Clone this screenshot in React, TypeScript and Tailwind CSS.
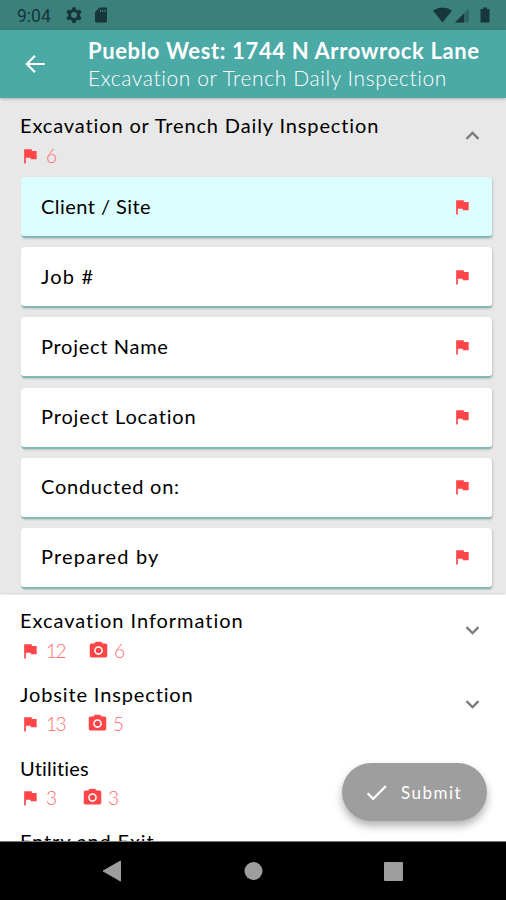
import React from "react";

const FLAG = "M14.4 6L14 4H5v17h2v-7h5.6l.4 2h7V6z";

function Icon({ d, size, className = "" }: { d: string; size: number; className?: string }) {
  return (
    <svg width={size} height={size} viewBox="0 0 24 24" fill="currentColor" className={`shrink-0 ${className}`}>
      <path d={d} />
    </svg>
  );
}

function Camera() {
  return (
    <svg width="21" height="21" viewBox="0 0 24 24" fill="currentColor" className="shrink-0">
      <circle cx="12" cy="12" r="3.2" />
      <path d="M9 2L7.17 4H4c-1.1 0-2 .9-2 2v12c0 1.1.9 2 2 2h16c1.1 0 2-.9 2-2V6c0-1.1-.9-2-2-2h-3.170L15 2H9zm3 15c-2.760 0-5-2.240-5-5s2.240-5 5-5 5 2.240 5 5-2.240 5-5 5z" />
    </svg>
  );
}

function Chevron({ up = false }: { up?: boolean }) {
  return (
    <svg width="25" height="25" viewBox="0 0 24 24" fill="#7b7b7b" className="shrink-0">
      <path d={up ? "M12 8l-6.500 6.500 1.500 1.500L12 11l5 5 1.500-1.500z" : "M7 8l5 5 5-5 1.500 1.500L12 16 5.500 9.500z"} />
    </svg>
  );
}

function Counts({ flags, photos, gap = "" }: { flags: string; photos?: string; gap?: string }) {
  return (
    <div className="flex h-5 items-center text-[19px] font-light leading-5 text-[#ff6b6e]">
      <span className="flex w-[31px] shrink-0 pt-px text-[#ff4548]">
        <Icon d={FLAG} size={20} />
      </span>
      <span className={`-ml-[5px] pt-px tracking-[-1.500px] ${gap}`}>{flags}</span>
      {photos && (
        <>
          <span className="flex w-[26px] shrink-0 text-[#ff4548]">
            <Camera />
          </span>
          <span className="pt-px">{photos}</span>
        </>
      )}
    </div>
  );
}

const fields = [
  { label: "Client / Site", track: "tracking-[0.45px]", bg: "bg-[#dcfeff]" },
  { label: "Job #", track: "tracking-[1.2px]", bg: "bg-white" },
  { label: "Project Name", track: "tracking-[0.7px]", bg: "bg-white" },
  { label: "Project Location", track: "tracking-[0.85px]", bg: "bg-white" },
  { label: "Conducted on:", track: "tracking-[0.75px]", bg: "bg-white" },
  { label: "Prepared by", track: "tracking-[1.2px]", bg: "bg-white" },
];

const sections = [
  { title: "Excavation Information", track: "tracking-[0.97px]", flags: "12", photos: "6", gap: "w-[42px]", open: true },
  { title: "Jobsite Inspection", track: "tracking-[0.87px]", flags: "13", photos: "5", gap: "w-[41px]", open: true },
  { title: "Utilities", track: "tracking-[0.2px]", flags: "3", photos: "3", gap: "w-[36px]", open: false },
  { title: "Entry and Exit", track: "tracking-[0.85px]", flags: "", photos: "", gap: "", open: false },
];

export default function App() {
  return (
    <div className="relative flex h-[900px] w-[506px] flex-col overflow-hidden bg-white font-['Lato',sans-serif] text-black">
      <div className="flex h-[30px] shrink-0 items-center bg-[#3c807b] text-[#16363a]">
        <span className="ml-[17px] w-[48px] pt-0.5 font-['Roboto',sans-serif] text-[17.500px]">9:04</span>
        <svg width="18" height="18" viewBox="0 0 24 24" className="shrink-0">
          <g fill="currentColor">
            <rect x="9.500" y="1.500" width="5" height="21" rx="1" />
            <rect x="9.500" y="1.500" width="5" height="21" rx="1" transform="rotate(60 12 12)" />
            <rect x="9.500" y="1.500" width="5" height="21" rx="1" transform="rotate(120 12 12)" />
          </g>
          <circle cx="12" cy="12" r="6" fill="#3c807b" stroke="currentColor" strokeWidth="4" />
        </svg>
        <Icon size={18} className="ml-[9px]" d="M20 2H10L4 8v12a2 2 0 0 0 2 2h12a2 2 0 0 0 2-2V2zm-8 6h-1.500V5H12v3zm3 0h-1.500V5H15v3zm3 0h-1.500V5H18v3z" />
        <svg width="62" height="20" viewBox="0 0 62 20" className="ml-auto mr-[14px]" fill="currentColor">
          <path d="M3 5.500Q12.500-.5 22 5.500L12.500 17.500z" />
          <path d="M39 3.500v14h-14z" opacity=".35" />
          <path d="M34 8.500v9h-9z" />
          <path d="M53 2.500h4V4h2.500v13.500h-9V4H53z" />
        </svg>
      </div>

      <header className="z-10 flex h-[68px] shrink-0 items-center bg-[#4ba9a6] text-white shadow-[0_1px_3px_rgba(0,0,0,0.25)]">
        <svg width="26" height="26" viewBox="0 0 24 24" fill="white" className="ml-[22px] shrink-0">
          <path d="M21 11H6.800l5.900-6-1.400-1.400L3 12l8.300 8.400 1.400-1.400-5.900-6H21z" />
        </svg>
        <div className="ml-10 whitespace-nowrap">
          <h1 className="h-[28px] pt-px text-[22px] font-bold leading-[28px] tracking-[0.63px]">Pueblo West: 1744 N Arrowrock Lane</h1>
          <p className="h-[28px] text-[21px] font-light leading-[28px] tracking-[0.6px]">Excavation or Trench Daily Inspection</p>
        </div>
      </header>

      <main className="flex min-h-0 flex-1 flex-col overflow-hidden">
        <section className="h-[495px] shrink-0 bg-[#e8e8e8] shadow-[0_1px_2px_rgba(0,0,0,0.2)]">
          <div className="flex h-[79px] justify-between pl-5 pr-[21px] pt-[15px]">
            <div>
              <h2 className="mb-[8px] h-6 whitespace-nowrap text-[20px] leading-6 tracking-[0.87px]">Excavation or Trench Daily Inspection</h2>
              <Counts flags="6" />
            </div>
            <div className="pt-[10px]">
              <Chevron up />
            </div>
          </div>
          <div className="flex flex-col gap-[9.200px] pl-[21px] pr-[14px]">
            {fields.map((f) => (
              <div
                key={f.label}
                className={`flex h-[61px] items-center justify-between rounded-[4px] border-b-2 border-[#83b9b4] px-5 shadow-[1px_1px_2px_rgba(0,0,0,0.15)] ${f.bg}`}
              >
                <span className={`pb-[2px] text-[20px] leading-6 ${f.track}`}>{f.label}</span>
                <Icon d={FLAG} size={20} className="text-[#ff4548]" />
              </div>
            ))}
          </div>
        </section>
        {sections.map((s) => (
          <section key={s.title} className="flex h-[73.800px] shrink-0 justify-between pl-5 pr-[21px] pt-[15px]">
            <div>
              <h2 className={`mb-[8px] h-6 whitespace-nowrap text-[20px] leading-6 ${s.track}`}>{s.title}</h2>
              {s.flags && <Counts flags={s.flags} photos={s.photos} gap={s.gap} />}
            </div>
            {s.open && (
              <div className="pt-[10px]">
                <Chevron />
              </div>
            )}
          </section>
        ))}
      </main>

      <button className="absolute left-[342px] top-[763px] flex h-[58px] w-[145px] items-center rounded-full bg-[#9e9e9e] pl-[21px] text-[17px] tracking-[1.500px] text-white shadow-[0_5px_8px_rgba(0,0,0,0.3)]">
        <svg width="27" height="27" viewBox="0 0 24 24" fill="white" className="shrink-0">
          <path d="M9 16.170L4.830 12l-1.420 1.410L9 19 21 7l-1.410-1.410z" />
        </svg>
        <span className="ml-[11px] pt-px">Submit</span>
      </button>

      <nav className="flex h-[59px] shrink-0 items-center border-t border-[#777] bg-black">
        <svg width="506" height="58" viewBox="0 0 506 58" fill="#9d9d9d">
          <path d="M103 29L120.500 19v20z" strokeLinejoin="round" stroke="#9d9d9d" />
          <circle cx="253.500" cy="29" r="9" />
          <rect x="384" y="20" width="19" height="19" rx="1" />
        </svg>
      </nav>
    </div>
  );
}
